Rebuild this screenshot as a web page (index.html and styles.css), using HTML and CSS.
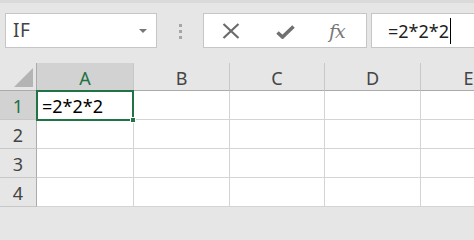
FILE: index.html
```html
<!DOCTYPE html>
<html>
<head>
<meta charset="utf-8">
<link rel="stylesheet" href="styles.css">
</head>
<body>
<div class="app">
  <div class="toolbar">
    <div class="namebox">
      <span class="name">IF</span>
      <span class="caret-down"></span>
    </div>
    <div class="grip"><i></i><i></i><i></i></div>
    <div class="fxbar">
      <svg class="ic ic-x" width="18" height="16" viewBox="0 0 18 16"><path d="M1.5 1 L16.5 15 M16.5 1 L1.5 15" stroke="#6b6b6b" stroke-width="2.2" fill="none"/></svg>
      <svg class="ic ic-check" width="19" height="14" viewBox="0 0 19 14"><path d="M1.5 7.5 L6.5 12 L17.5 1.5" stroke="#707070" stroke-width="3.6" fill="none" stroke-linejoin="miter"/></svg>
      <span class="fx">fx</span>
    </div>
    <div class="formula"><span class="ftext">=2*2*2</span><span class="cursor"></span></div>
  </div>
  <div class="sheet">
    <div class="hd corner"><span class="tri"></span></div>
    <div class="hd col sel">A</div>
    <div class="hd col">B</div>
    <div class="hd col">C</div>
    <div class="hd col">D</div>
    <div class="hd col">E</div>

    <div class="hd row sel">1</div>
    <div class="cell active">=2*2*2<span class="selbox"><span class="handle"></span></span></div>
    <div class="cell"></div><div class="cell"></div><div class="cell"></div><div class="cell"></div>

    <div class="hd row">2</div>
    <div class="cell"></div><div class="cell"></div><div class="cell"></div><div class="cell"></div><div class="cell"></div>

    <div class="hd row">3</div>
    <div class="cell"></div><div class="cell"></div><div class="cell"></div><div class="cell"></div><div class="cell"></div>

    <div class="hd row">4</div>
    <div class="cell"></div><div class="cell"></div><div class="cell"></div><div class="cell"></div><div class="cell"></div>
  </div>
</div>
</body>
</html>
```
FILE: styles.css
```css
* { box-sizing: border-box; }
html, body { margin: 0; padding: 0; }
body {
  background: #e6e6e6;
  font-family: "Noto Sans", "Open Sans", sans-serif;
  width: 474px;
  height: 207px;
  overflow: hidden;
}
.app { width: 474px; height: 207px; overflow: hidden; }
.toolbar {
  height: 63px;
  border-top: 3px solid #dadada;
  padding-top: 10px;
  display: flex;
  align-items: flex-start;
  white-space: nowrap;
}
.namebox {
  margin-left: 5px;
  width: 152px;
  height: 35px;
  background: #fff;
  border: 1px solid #c6c6c6;
  display: flex;
  align-items: center;
  justify-content: space-between;
  padding: 0 9px 0 7px;
}
.name { font-size: 19px; color: #444; letter-spacing: 0.5px; line-height: 1; margin-top: -1px; }
.caret-down {
  width: 0; height: 0;
  border-left: 4px solid transparent;
  border-right: 4px solid transparent;
  border-top: 4px solid #777;
  margin-top: 1px;
}
.grip {
  width: 46px;
  height: 35px;
  display: flex;
  flex-direction: column;
  align-items: center;
  justify-content: center;
  gap: 3px;
  padding-top: 1px;
}
.grip i { display: block; width: 3px; height: 3px; background: #a6a6a6; }
.fxbar {
  width: 164px;
  height: 35px;
  background: #fff;
  border: 1px solid #c6c6c6;
  display: flex;
  align-items: center;
  padding-left: 18px;
}
.ic { display: block; flex: none; }
.ic-x { margin-top: 1px; }
.ic-check { margin-left: 36px; margin-top: 3px; }
.fx {
  margin-left: 34px;
  font-family: "DejaVu Serif", "Liberation Serif", serif;
  font-style: italic;
  font-size: 19px;
  color: #777;
  letter-spacing: -1px;
  line-height: 1;
  margin-top: 1px;
}
.formula {
  margin-left: 4px;
  flex: 1;
  height: 35px;
  background: #fff;
  border: 1px solid #c6c6c6;
  border-right: none;
  display: flex;
  align-items: center;
  padding-left: 16px;
}
.ftext { font-size: 18px; color: #222; line-height: 1; }
.cursor { display: block; width: 1px; height: 26px; background: #000; margin-left: 1px; }

.sheet {
  display: grid;
  grid-template-columns: 37px 97px 96px 95px 96px 96px;
  grid-template-rows: 28px 29px 29px 29px 29px;
  background: #fff;
  width: 517px;
}
.hd {
  background: #e6e6e6;
  color: #444;
  font-size: 18px;
  display: flex;
  align-items: center;
  justify-content: center;
  line-height: 1;
}
.col { border-right: 1px solid #c8c8c8; border-bottom: 1px solid #ababab; padding-top: 2px; }
.corner { border-right: 1px solid #ababab; border-bottom: 1px solid #ababab; position: relative; }
.tri {
  position: absolute;
  right: 3px; bottom: 3px;
  width: 0; height: 0;
  border-left: 19px solid transparent;
  border-bottom: 19px solid #b4b4b4;
}
.row { border-right: 1px solid #ababab; border-bottom: 1px solid #c8c8c8; padding-top: 2px; }
.hd.sel { background: #d2d2d2; color: #217346; }
.cell {
  border-right: 1px solid #d4d4d4;
  border-bottom: 1px solid #d4d4d4;
  font-size: 18px;
  color: #000;
  line-height: 1;
  display: flex;
  align-items: center;
  padding-left: 5px;
  padding-top: 2px;
  white-space: nowrap;
}
.active { position: relative; }
.selbox {
  position: absolute;
  left: -1px; top: -1px; right: -1px; bottom: -2px;
  border: 2px solid #217346;
}
.handle {
  position: absolute;
  right: -4px; bottom: -4px;
  width: 6px; height: 6px;
  background: #217346;
  border: 1px solid #fff;
}
```
